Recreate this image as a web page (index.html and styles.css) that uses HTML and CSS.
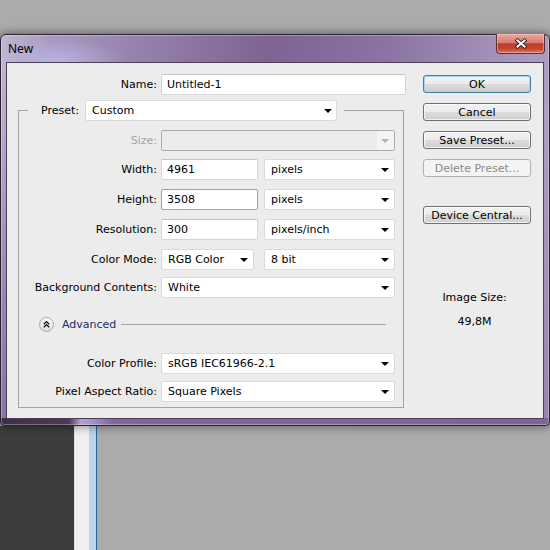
FILE: index.html
```html
<!DOCTYPE html>
<html lang="en">
<head>
    <meta charset="UTF-8">
    <meta name="viewport" content="width=device-width, initial-scale=1.0">
    <title>New</title>
    <link rel="stylesheet" href="styles.css">
</head>
<body>
    <div class="window">
        <div class="titlebar">
            <span class="title">New</span>
            <button class="close" type="button">
                <svg width="14" height="11" viewBox="0 0 14 11">
                    <path d="M3.5 2.5 L10.5 8.5 M10.5 2.5 L3.5 8.5" stroke="#3b2626" stroke-width="4" stroke-linecap="square"/>
                    <path d="M3.5 2.5 L10.5 8.5 M10.5 2.5 L3.5 8.5" stroke="#ffffff" stroke-width="2" stroke-linecap="square"/>
                </svg>
            </button>
        </div>
        <div class="client">
            <div class="form">
                <div class="row name-row">
                    <label class="lbl">Name:</label>
                    <input class="field" type="text" value="Untitled-1">
                </div>
                <fieldset class="group">
                    <legend>
                        <div class="preset">
                            <label class="lbl">Preset:</label>
                            <div class="select preset-select"><span>Custom</span><i class="caret"></i></div>
                        </div>
                    </legend>
                    <div class="row">
                        <label class="lbl disabled">Size:</label>
                        <div class="select off"><span></span><i class="caret"></i></div>
                    </div>
                    <div class="row mt8">
                        <label class="lbl">Width:</label>
                        <div class="pair">
                            <input class="field num" type="text" value="4961">
                            <div class="select unit"><span>pixels</span><i class="caret"></i></div>
                        </div>
                    </div>
                    <div class="row mt9">
                        <label class="lbl">Height:</label>
                        <div class="pair">
                            <input class="field num focus" type="text" value="3508">
                            <div class="select unit"><span>pixels</span><i class="caret"></i></div>
                        </div>
                    </div>
                    <div class="row mt9">
                        <label class="lbl">Resolution:</label>
                        <div class="pair">
                            <input class="field num" type="text" value="300">
                            <div class="select unit"><span>pixels/inch</span><i class="caret"></i></div>
                        </div>
                    </div>
                    <div class="row mt9">
                        <label class="lbl">Color Mode:</label>
                        <div class="pair">
                            <div class="select mode"><span>RGB Color</span><i class="caret"></i></div>
                            <div class="select unit"><span>8 bit</span><i class="caret"></i></div>
                        </div>
                    </div>
                    <div class="row mt7">
                        <label class="lbl">Background Contents:</label>
                        <div class="select"><span>White</span><i class="caret"></i></div>
                    </div>
                    <div class="advanced">
                        <span class="toggle">
                            <svg width="15" height="15" viewBox="0 0 15 15">
                                <defs>
                                    <linearGradient id="knob" x1="0" y1="0" x2="0" y2="1">
                                        <stop offset="0" stop-color="#ffffff"/>
                                        <stop offset="1" stop-color="#dcdcdc"/>
                                    </linearGradient>
                                </defs>
                                <circle cx="7.5" cy="7.5" r="7" fill="url(#knob)" stroke="#a9a9a9"/>
                                <path d="M4.8 7.3 L7.5 4.6 L10.2 7.3 M4.8 10.3 L7.5 7.6 L10.2 10.3" fill="none" stroke="#111" stroke-width="1.3"/>
                            </svg>
                        </span>
                        <span class="adv-text">Advanced</span>
                        <span class="rule"></span>
                    </div>
                    <div class="row mt21">
                        <label class="lbl">Color Profile:</label>
                        <div class="select"><span>sRGB IEC61966-2.1</span><i class="caret"></i></div>
                    </div>
                    <div class="row mt7">
                        <label class="lbl">Pixel Aspect Ratio:</label>
                        <div class="select"><span>Square Pixels</span><i class="caret"></i></div>
                    </div>
                </fieldset>
            </div>
            <div class="side">
                <button class="btn default" type="button">OK</button>
                <button class="btn" type="button">Cancel</button>
                <button class="btn" type="button">Save Preset...</button>
                <button class="btn" type="button" disabled>Delete Preset...</button>
                <button class="btn device" type="button">Device Central...</button>
                <div class="info">
                    <div>Image Size:</div>
                    <div class="size">49,8M</div>
                </div>
            </div>
        </div>
    </div>
    <div class="workspace">
        <div class="panel-dark"></div>
        <div class="panel-light"></div>
        <div class="panel-blue"></div>
        <div class="canvas"></div>
    </div>
</body>
</html>
```

FILE: styles.css
```css
* {
    box-sizing: border-box;
}
body {
    margin: 0;
    height: 550px;
    overflow: hidden;
    background: #ababab;
    font-family: "DejaVu Sans", sans-serif;
    font-size: 11px;
    color: #000;
}

/* window frame */
.window {
    position: relative;
    z-index: 1;
    margin-top: 34px;
    width: 550px;
    height: 392px;
    display: flex;
    flex-direction: column;
    border: 1px solid #2a2230;
    border-radius: 6px 6px 4px 4px;
    background:
        linear-gradient(to right, #3e2f49 0, #4b3a58 68px, #b6a2d2 80px, #a18cc0 94px, #806797 112px, #7d6595 100%) bottom / 100% 7px no-repeat,
        radial-gradient(ellipse 70px 22px at 55px 26px, rgba(190, 190, 235, 0.7), rgba(190, 190, 235, 0)),
        linear-gradient(to bottom, rgba(60, 20, 80, 0) 20%, rgba(60, 20, 80, 0.25) 100%),
        linear-gradient(100deg, #c2b6d0 0%, #a999c0 8%, #9782ad 22%, #7e6393 44%, #8a72a2 62%, #a592b9 82%, #b8a9c8 100%);
    box-shadow: 0 0 9px 1px rgba(0, 0, 0, 0.45), inset 0 0 0 1px rgba(255, 255, 255, 0.3);
}
.titlebar {
    height: 27px;
    display: flex;
    align-items: center;
    padding-left: 7px;
}
.title {
    flex: 1;
    font-family: "Noto Sans", sans-serif;
    font-size: 12px;
    color: #000;
}
.close {
    align-self: flex-start;
    margin-top: -1px;
    margin-right: 4px;
    width: 49px;
    height: 20px;
    padding: 0;
    display: flex;
    align-items: center;
    justify-content: center;
    border: 1px solid #5b3232;
    border-top: none;
    border-radius: 0 0 4px 4px;
    background: linear-gradient(#e9aaa0, #d97c70 45%, #c23b2c 52%, #c6452f 78%, #dc7a62);
    box-shadow: inset 0 0 0 1px rgba(255, 210, 200, 0.45);
}
.client {
    margin: 0 5px;
    height: 357px;
    display: flex;
    border: 1px solid #4a3d56;
    background: #ececec;
}

/* left column */
.form {
    width: 400px;
    padding-top: 11px;
}
.row {
    display: grid;
    grid-template-columns: 129px 234px;
    column-gap: 4px;
    align-items: center;
}
.name-row {
    grid-template-columns: 150px 245px;
}
.lbl {
    text-align: right;
    white-space: nowrap;
}
.lbl.disabled {
    color: #a3a3a3;
}
.field {
    height: 21px;
    margin: 0;
    padding: 0 5px;
    font: inherit;
    color: #000;
    background: #fff;
    border: 1px solid #d5d5d5;
    border-top-color: #c4c4c4;
    border-radius: 2px;
    outline: none;
}
.field.focus {
    border-color: #7ea9d8;
}
.num {
    width: 97px;
}
.select {
    height: 21px;
    display: flex;
    align-items: center;
    justify-content: space-between;
    padding: 0 5px 0 6px;
    background: #fff;
    border: 1px solid #dadada;
    border-radius: 2px;
    white-space: nowrap;
}
.caret {
    width: 0;
    height: 0;
    border-left: 4px solid transparent;
    border-right: 4px solid transparent;
    border-top: 4px solid #000;
}
.select.off {
    padding-right: 0;
    background: linear-gradient(to right, #ebebeb 0, #ebebeb 215px, #f4f4f4 215px);
    border-color: #acacac;
}
.select.off .caret {
    margin-right: 5px;
    border-top-color: #b3b3b3;
}
.pair {
    display: flex;
    justify-content: space-between;
}
.unit {
    width: 131px;
}
.mode {
    width: 93px;
}
.mt7 { margin-top: 7px; }
.mt8 { margin-top: 8px; }
.mt9 { margin-top: 9px; }
.mt21 { margin-top: 21px; }

/* preset group */
.group {
    margin: 5px 0 0 11px;
    width: 386px;
    min-width: 0;
    padding: 9px 0 5px 9px;
    border: 1px solid #a3a3a3;
}
.group legend {
    padding: 0 7px 0 13px;
}
.preset {
    display: flex;
    align-items: center;
    gap: 6px;
}
.preset-select {
    width: 252px;
    padding-right: 4px;
}
.advanced {
    margin-top: 19px;
    height: 15px;
    display: flex;
    align-items: center;
    padding-left: 11px;
}
.toggle {
    display: flex;
    width: 15px;
    height: 15px;
}
.adv-text {
    margin-left: 8px;
    color: #1b2c66;
}
.rule {
    flex: 1;
    height: 1px;
    margin: 0 17px 1px 5px;
    background: #a5a5a5;
}

/* right column */
.side {
    margin-left: 16px;
    width: 108px;
    padding-top: 12px;
    display: flex;
    flex-direction: column;
}
.btn {
    height: 18px;
    padding: 0;
    font: inherit;
    color: #000;
    border: 1px solid #707070;
    border-radius: 3px;
    background: linear-gradient(#f2f2f2 0%, #ebebeb 50%, #dcdcdc 50%, #cfcfcf 100%);
    box-shadow: inset 0 0 0 1px rgba(255, 255, 255, 0.7);
}
.btn + .btn {
    margin-top: 10px;
}
.btn.default {
    border-color: #3c7fb1;
    box-shadow: inset 0 0 0 1px #9fd6f5;
}
.btn:disabled {
    color: #8a8a8a;
    border-color: #adb2b5;
    background: #f4f4f4;
    box-shadow: none;
}
.btn.device {
    margin-top: 29px;
}
.info {
    margin-top: 67px;
    line-height: 13px;
    text-align: center;
    padding-right: 5px;
}
.size {
    margin-top: 11px;
}

/* application behind the dialog */
.workspace {
    height: 124px;
    display: flex;
}
.panel-dark {
    width: 74px;
    background: #3d3d3d;
}
.panel-light {
    width: 15px;
    background: #efefef;
    border-left: 1px solid #dedede;
}
.panel-blue {
    width: 8px;
    background: #bcd4ec;
    border-right: 1px solid #1d6a92;
}
.canvas {
    flex: 1;
    background: #ababab;
}
```
